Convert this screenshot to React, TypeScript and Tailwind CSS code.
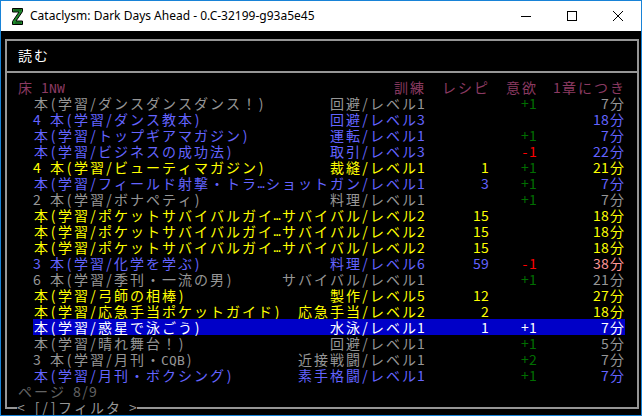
import React from 'react';

type Seg = { col: number; text: string; cls: string };

const C = {
  gray: 'text-[#969696]',
  lblue: 'text-[#6464ff]',
  yellow: 'text-[#ffff00]',
  white: 'text-white',
  green: 'text-[#006e00]',
  red: 'text-[#ff0000]',
  lred: 'text-[#ff9696]',
  mag: 'text-[#8b3a62]',
  dgray: 'text-[#636363]',
};

const isWide = (ch: string) => {
  const c = ch.codePointAt(0) || 0;
  return (
    (c >= 0x1100 && c <= 0x115f) ||
    (c >= 0x2e80 && c <= 0xa4cf) ||
    (c >= 0xac00 && c <= 0xd7a3) ||
    (c >= 0xf900 && c <= 0xfaff) ||
    (c >= 0xfe30 && c <= 0xfe4f) ||
    (c >= 0xff00 && c <= 0xff60) ||
    (c >= 0xffe0 && c <= 0xffe6)
  );
};

const strW = (s: string) => Array.from(s).reduce((a, ch) => a + (isWide(ch) ? 2 : 1), 0);

function Ch({ ch }: { ch: string }) {
  if (ch === '…') {
    return <span className="inline-block w-[8px] h-[16px] leading-[19px] text-center overflow-hidden font-['DejaVu_Sans_Mono'] text-[12px]">…</span>;
  }
  if (/[A-Za-z]/.test(ch)) {
    return <span className="inline-block w-[8px] h-[16px] leading-[19px] text-center overflow-hidden font-['DejaVu_Sans_Mono'] text-[13px]">{ch}</span>;
  }
  return (
    <span className={isWide(ch) ? 'inline-block w-[16px] h-[16px] leading-[16px] text-center' : 'inline-block w-[8px] h-[16px] leading-[16px] text-center'}>
      {ch === ' ' ? '\u00a0' : ch}
    </span>
  );
}

function Text({ text, cls }: { text: string; cls: string }) {
  return (
    <span className={'flex ' + cls}>
      {Array.from(text).map((ch, i) => (
        <Ch key={i} ch={ch} />
      ))}
    </span>
  );
}

function fill(segs: Seg[], from: number, to?: number) {
  const out: { text: string; cls: string }[] = [];
  let col = from;
  const sorted = segs.filter((s) => s.text).sort((a, b) => a.col - b.col);
  for (const s of sorted) {
    if (s.col > col) out.push({ text: ' '.repeat(s.col - col), cls: '' });
    out.push({ text: s.text, cls: s.cls });
    col = s.col + strW(s.text);
  }
  if (to !== undefined && to + 1 > col) out.push({ text: ' '.repeat(to + 1 - col), cls: '' });
  return out;
}

function Row({ segs, hl }: { segs: Seg[]; hl?: boolean }) {
  if (hl) {
    return (
      <div className="flex h-[16px] pl-[10px]">
        <Text text="  " cls="" />
        <div className="flex bg-[#0000c8]">
          {fill(segs, 4, 77).map((s, i) => (
            <Text key={i} text={s.text} cls={s.cls} />
          ))}
        </div>
      </div>
    );
  }
  return (
    <div className="flex h-[16px] pl-[10px]">
      {fill(segs, 2).map((s, i) => (
        <Text key={i} text={s.text} cls={s.cls} />
      ))}
    </div>
  );
}

type Item = { n: string; s: string; r?: string; m?: string; t: string; c: string; tc?: string; sel?: boolean };

const items: Item[] = [
  { n: '本(学習/ダンスダンスダンス！)', s: '回避/レベル1', m: '+1', t: '7分', c: C.gray },
  { n: '4 本(学習/ダンス教本)', s: '回避/レベル3', t: '18分', c: C.lblue },
  { n: '本(学習/トップギアマガジン)', s: '運転/レベル1', m: '+1', t: '7分', c: C.lblue },
  { n: '本(学習/ビジネスの成功法)', s: '取引/レベル3', m: '-1', t: '22分', c: C.lblue },
  { n: '4 本(学習/ビューティマガジン)', s: '裁縫/レベル1', r: '1', m: '+1', t: '21分', c: C.yellow },
  { n: '本(学習/フィールド射撃・トラ…', s: 'ショットガン/レベル1', r: '3', m: '+1', t: '7分', c: C.lblue },
  { n: '2 本(学習/ボナペティ)', s: '料理/レベル1', m: '+1', t: '7分', c: C.gray },
  { n: '本(学習/ポケットサバイバルガイ…', s: 'サバイバル/レベル2', r: '15', t: '18分', c: C.yellow },
  { n: '本(学習/ポケットサバイバルガイ…', s: 'サバイバル/レベル2', r: '15', t: '18分', c: C.yellow },
  { n: '本(学習/ポケットサバイバルガイ…', s: 'サバイバル/レベル2', r: '15', t: '18分', c: C.yellow },
  { n: '3 本(学習/化学を学ぶ)', s: '料理/レベル6', r: '59', m: '-1', t: '38分', c: C.lblue, tc: C.lred },
  { n: '6 本(学習/季刊・一流の男)', s: 'サバイバル/レベル1', m: '+1', t: '21分', c: C.gray },
  { n: '本(学習/弓師の相棒)', s: '製作/レベル5', r: '12', t: '27分', c: C.yellow },
  { n: '本(学習/応急手当ポケットガイド)', s: '応急手当/レベル2', r: '2', t: '18分', c: C.yellow },
  { n: '本(学習/惑星で泳ごう)', s: '水泳/レベル1', r: '1', m: '+1', t: '7分', c: C.white, sel: true },
  { n: '本(学習/晴れ舞台！)', s: '回避/レベル1', m: '+1', t: '5分', c: C.gray },
  { n: '3 本(学習/月刊・CQB)', s: '近接戦闘/レベル1', m: '+2', t: '7分', c: C.gray },
  { n: '本(学習/月刊・ボクシング)', s: '素手格闘/レベル1', m: '+1', t: '7分', c: C.lblue },
];

const right = (end: number, text: string, cls: string): Seg => ({ col: end - strW(text) + 1, text, cls });

function itemSegs(it: Item): Seg[] {
  const mc = it.sel ? C.white : it.m && it.m.startsWith('-') ? C.red : C.green;
  return [
    { col: 4, text: it.n, cls: it.c },
    right(52, it.s, it.c),
    right(60, it.r || '', it.c),
    right(66, it.m || '', mc),
    right(77, it.t, it.tc || it.c),
  ];
}

function ZIcon() {
  return (
    <svg width="11" height="17" viewBox="0 0 11 17">
      <polygon points="0.5,0.5 10.5,0.5 10.5,3.5 4,13 10.5,13 10.5,16.5 0.5,16.5 0.5,13.5 7,4 0.5,4" fill="#1f8a2c" stroke="#000" strokeWidth="1" />
      <path d="M2 2 L9 2 M3 15 L9 15" stroke="#0c4d14" strokeWidth="1" />
    </svg>
  );
}

export default function App() {
  return (
    <div className="w-[642px] h-[416px] border border-[#1883d7] bg-white overflow-hidden">
      <div className="flex h-[30px] items-center bg-white">
        <div className="ml-[11px] mt-[1px] flex items-center">
          <ZIcon />
        </div>
        <div className="ml-[7px] text-[12px] text-black font-['Noto_Sans'] leading-none">Cataclysm: Dark Days Ahead - 0.C-32199-g93a5e45</div>
        <div className="flex-1" />
        <div className="flex h-[30px] w-[46px] items-center justify-center">
          <svg width="10" height="10" viewBox="0 0 10 10">
            <path d="M0 5.5 H10" stroke="#000" strokeWidth="1" />
          </svg>
        </div>
        <div className="flex h-[30px] w-[46px] items-center justify-center">
          <svg width="10" height="10" viewBox="0 0 10 10">
            <rect x="0.5" y="0.5" width="9" height="9" fill="none" stroke="#000" strokeWidth="1" />
          </svg>
        </div>
        <div className="flex h-[30px] w-[46px] items-center justify-center">
          <svg width="10" height="10" viewBox="0 0 10 10">
            <path d="M0 0 L10 10 M10 0 L0 10" stroke="#000" strokeWidth="1" />
          </svg>
        </div>
      </div>
      <div className="w-[640px] h-[384px] bg-black text-[14px] font-['Noto_Sans_CJK_JP',sans-serif]">
        <div className="pt-[8px] pl-[4px]">
          <div className="w-[634px] border-l-2 border-r-2 border-t-2 border-[#969696]">
            <div className="h-[6px]" />
            <Row segs={[{ col: 2, text: '読む', cls: C.white }]} />
            <div className="h-[8px]" />
            <div className="h-[2px] bg-[#969696]" />
            <div className="h-[6px]" />
            <Row
              segs={[
                { col: 2, text: '床 1NW', cls: C.mag },
                { col: 49, text: '訓練', cls: C.mag },
                { col: 55, text: 'レシピ', cls: C.mag },
                { col: 63, text: '意欲', cls: C.mag },
                { col: 69, text: '1章につき', cls: C.mag },
              ]}
            />
            {items.map((it, i) => (
              <Row key={i} segs={itemSegs(it)} hl={it.sel} />
            ))}
            <Row segs={[{ col: 2, text: 'ページ 8/9', cls: C.dgray }]} />
          </div>
          <div className="flex w-[634px] h-[16px]">
            <div className="w-[12px] h-[10px] border-l-2 border-b-2 border-[#969696]" />
            <Text text="< [/]フィルタ >" cls={C.gray} />
            <div className="flex-1 h-[10px] border-r-2 border-b-2 border-[#969696]" />
          </div>
        </div>
      </div>
    </div>
  );
}
